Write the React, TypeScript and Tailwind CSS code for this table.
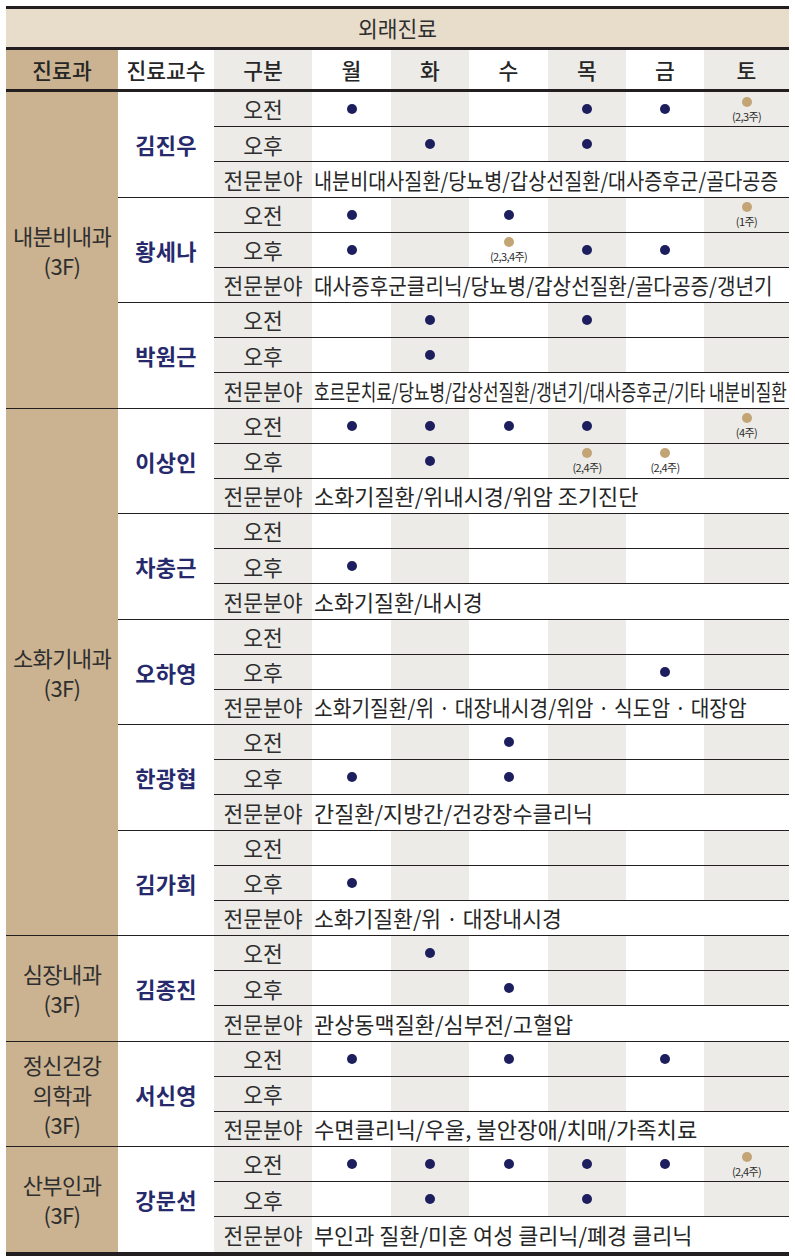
import { useLayoutEffect, useRef, useState } from "react";

type Slot = 0 | 1 | string;
type Doc = { n: string; am: Slot[]; pm: Slot[]; sp: string; w: number };
type Dept = { name: string[]; docs: Doc[] };

const Z: Slot[] = [0, 0, 0, 0, 0, 0];

const DEPTS: Dept[] = [
  {
    name: ["내분비내과", "(3F)"],
    docs: [
      { n: "김진우", am: [1, 0, 0, 1, 1, "(2,3주)"], pm: [0, 1, 0, 1, 0, 0], sp: "내분비대사질환/당뇨병/갑상선질환/대사증후군/골다공증", w: 464 },
      { n: "황세나", am: [1, 0, 1, 0, 0, "(1주)"], pm: [1, 0, "(2,3,4주)", 1, 1, 0], sp: "대사증후군클리닉/당뇨병/갑상선질환/골다공증/갱년기", w: 459 },
      { n: "박원근", am: [0, 1, 0, 1, 0, 0], pm: [0, 1, 0, 0, 0, 0], sp: "호르몬치료/당뇨병/갑상선질환/갱년기/대사증후군/기타 내분비질환", w: 473 },
    ],
  },
  {
    name: ["소화기내과", "(3F)"],
    docs: [
      { n: "이상인", am: [1, 1, 1, 1, 0, "(4주)"], pm: [0, 1, 0, "(2,4주)", "(2,4주)", 0], sp: "소화기질환/위내시경/위암 조기진단", w: 324 },
      { n: "차충근", am: Z, pm: [1, 0, 0, 0, 0, 0], sp: "소화기질환/내시경", w: 169 },
      { n: "오하영", am: Z, pm: [0, 0, 0, 0, 1, 0], sp: "소화기질환/위 · 대장내시경/위암 · 식도암 · 대장암", w: 433 },
      { n: "한광협", am: [0, 0, 1, 0, 0, 0], pm: [1, 0, 1, 0, 0, 0], sp: "간질환/지방간/건강장수클리닉", w: 279 },
      { n: "김가희", am: Z, pm: [1, 0, 0, 0, 0, 0], sp: "소화기질환/위 · 대장내시경", w: 248 },
    ],
  },
  {
    name: ["심장내과", "(3F)"],
    docs: [{ n: "김종진", am: [0, 1, 0, 0, 0, 0], pm: [0, 0, 1, 0, 0, 0], sp: "관상동맥질환/심부전/고혈압", w: 259 }],
  },
  {
    name: ["정신건강", "의학과", "(3F)"],
    docs: [{ n: "서신영", am: [1, 0, 1, 0, 1, 0], pm: Z, sp: "수면클리닉/우울, 불안장애/치매/가족치료", w: 383 }],
  },
  {
    name: ["산부인과", "(3F)"],
    docs: [{ n: "강문선", am: [1, 1, 1, 1, 1, "(2,4주)"], pm: [0, 1, 0, 1, 0, 0], sp: "부인과 질환/미혼 여성 클리닉/폐경 클리닉", w: 378 }],
  },
];

const DAY_CLS = [
  "w-[79px] bg-white",
  "w-[78px] bg-[#ecebe7]",
  "w-[79px] bg-white",
  "w-[78px] bg-[#ecebe7]",
  "w-[78px] bg-white",
  "w-[85px] bg-[#ecebe7]",
];
const DAYS = ["월", "화", "수", "목", "금", "토"];

function Fit({ text, w }: { text: string; w: number }) {
  const ref = useRef<HTMLSpanElement>(null);
  const [s, setS] = useState(1);
  useLayoutEffect(() => {
    const m = () => {
      const el = ref.current;
      if (!el) return;
      const nw = el.offsetWidth;
      if (nw > 0) setS(Math.max(0.6, Math.min(1.1, w / nw)));
    };
    m();
    if (document.fonts && document.fonts.ready) document.fonts.ready.then(m);
  }, [text, w]);
  return (
    <span ref={ref} className="inline-block whitespace-nowrap origin-left" style={{ transform: `scaleX(${s})` }}>
      {text}
    </span>
  );
}

function Cell({ v, i }: { v: Slot; i: number }) {
  return (
    <div className={`${DAY_CLS[i]} shrink-0 h-full flex flex-col items-center justify-center`}>
      {v === 1 && <div className="w-[10px] h-[10px] rounded-full bg-[#1d1e5e]" />}
      {typeof v === "string" && (
        <>
          <div className="w-[10px] h-[10px] rounded-full bg-[#c3a474]" />
          <div className="mt-[3px] text-[11px] leading-[12px] tracking-[-0.6px] text-[#2b2b2b]">{v}</div>
        </>
      )}
    </div>
  );
}

function SlotRow({ label, slots }: { label: string; slots: Slot[] }) {
  return (
    <div className="flex-1 min-w-0 flex border-b border-[#231f20]">
      <div className="w-[98px] shrink-0 bg-[#ecebe7] flex items-center justify-center text-[21.5px] leading-none text-[#2e2e2e]">{label}</div>
      {slots.map((v, i) => (
        <Cell key={i} v={v} i={i} />
      ))}
    </div>
  );
}

function DoctorBlock({ d, last }: { d: Doc; last: boolean }) {
  return (
    <div className={`flex min-w-0 ${last ? "h-[104.5px]" : "h-[105.5px] border-b border-[#231f20]"}`}>
      <div className="w-[96px] shrink-0 bg-white flex items-center justify-center text-[22px] font-bold leading-none tracking-[0.3px] text-[#262a6c]">
        {d.n}
      </div>
      <div className="flex-1 min-w-0 flex flex-col">
        <SlotRow label="오전" slots={d.am} />
        <SlotRow label="오후" slots={d.pm} />
        <div className="flex-1 min-w-0 flex">
          <div className="w-[98px] shrink-0 bg-[#ecebe7] flex items-center justify-center text-[21.5px] leading-none text-[#2e2e2e]">전문분야</div>
          <div className="flex-1 min-w-0 bg-white flex items-center pl-[2px] text-[21.5px] leading-none text-[#262626] overflow-hidden">
            <Fit text={d.sp} w={d.w} />
          </div>
        </div>
      </div>
    </div>
  );
}

function DeptBlock({ dept, last }: { dept: Dept; last: boolean }) {
  return (
    <div className={`flex ${last ? "" : "border-b border-[#231f20]"}`}>
      <div className="w-[112px] shrink-0 bg-[#cbb391] flex flex-col items-center justify-center text-[22px] leading-[30px] tracking-[-0.6px] text-[#2e2e2e]">
        {dept.name.map((t) => (
          <div key={t}>{t}</div>
        ))}
      </div>
      <div className="flex-1 min-w-0 flex flex-col">
        {dept.docs.map((d, i) => (
          <DoctorBlock key={d.n} d={d} last={i === dept.docs.length - 1} />
        ))}
      </div>
    </div>
  );
}

export default function App() {
  return (
    <div className="min-h-[1260px] bg-white pt-[6px] pl-[6px] font-['Noto_Sans_CJK_KR','Noto_Sans',sans-serif]">
      <div className="w-[783px] border-t-[3px] border-b-[4px] border-[#231f20]">
        <div className="h-[41px] bg-[#e8dcca] border-b-[3px] border-[#231f20] flex items-center justify-center text-[21.5px] leading-none text-[#2e2e2e]">
          외래진료
        </div>
        <div className="h-[42px] flex border-b-[3px] border-[#231f20] text-[21.5px] leading-none font-medium text-[#262626]">
          <div className="w-[112px] shrink-0 bg-[#cbb391] flex items-center justify-center">진료과</div>
          <div className="w-[96px] shrink-0 bg-white flex items-center justify-center">진료교수</div>
          <div className="w-[98px] shrink-0 bg-[#ecebe7] flex items-center justify-center">구분</div>
          {DAYS.map((d, i) => (
            <div key={d} className={`${DAY_CLS[i]} shrink-0 flex items-center justify-center`}>
              {d}
            </div>
          ))}
        </div>
        {DEPTS.map((dp, i) => (
          <DeptBlock key={dp.name[0]} dept={dp} last={i === DEPTS.length - 1} />
        ))}
      </div>
    </div>
  );
}
